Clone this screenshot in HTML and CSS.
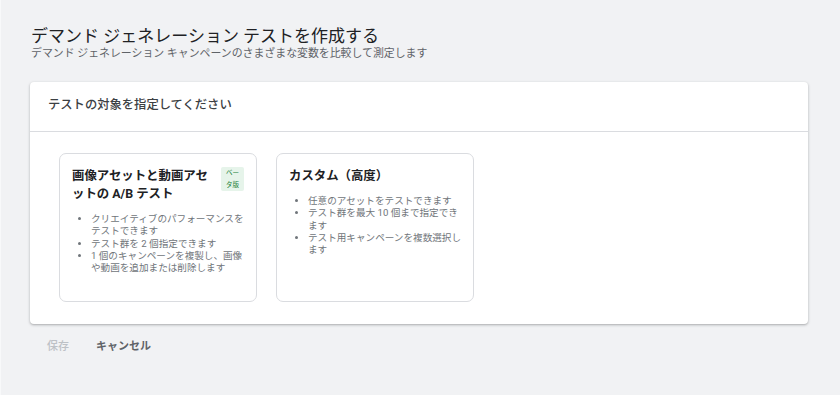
FILE: index.html
```html
<!DOCTYPE html>
<html lang="ja">
<head>
  <meta charset="UTF-8">
  <meta name="viewport" content="width=device-width, initial-scale=1.0">
  <title>デマンド ジェネレーション テストを作成する</title>
  <link rel="stylesheet" href="styles.css">
</head>
<body>
  <div class="page">
    <div class="page-header">
      <h1 class="title">デマンド ジェネレーション テストを作成する</h1>
      <p class="subtitle">デマンド ジェネレーション キャンペーンのさまざまな変数を比較して測定します</p>
    </div>

    <div class="panel">
      <div class="panel-header">テストの対象を指定してください</div>
      <div class="panel-body">
        <div class="option">
          <div class="option-head">
            <div class="option-title">画像アセットと動画アセットの A/B テスト</div>
            <span class="badge">ベータ版</span>
          </div>
          <ul class="option-list">
            <li>クリエイティブのパフォーマンスをテストできます</li>
            <li>テスト群を 2 個指定できます</li>
            <li>1 個のキャンペーンを複製し、画像や動画を追加または削除します</li>
          </ul>
        </div>

        <div class="option">
          <div class="option-head">
            <div class="option-title">カスタム（高度）</div>
          </div>
          <ul class="option-list">
            <li>任意のアセットをテストできます</li>
            <li>テスト群を最大 10 個まで指定できます</li>
            <li>テスト用キャンペーンを複数選択します</li>
          </ul>
        </div>
      </div>
    </div>

    <div class="actions">
      <button class="action disabled">保存</button>
      <button class="action">キャンセル</button>
    </div>
  </div>
</body>
</html>
```

FILE: styles.css
```css
html, body {
  margin: 0;
  height: 100%;
}

body {
  background-color: #f1f2f4;
  font-family: Roboto, "Noto Sans CJK JP", sans-serif;
  color: #202124;
}

.page {
  min-height: 100%;
  box-sizing: border-box;
  border-left: 1px solid #f8f9fa;
  padding: 25px 32px 0 29px;
}

.page-header {
  padding-left: 1px;
}

.title {
  margin: 0;
  font-size: 17px;
  font-weight: 400;
  line-height: 22px;
  color: #202124;
}

.subtitle {
  margin: 0;
  font-size: 10.9px;
  line-height: 14px;
  color: #5f6368;
}

.panel {
  margin-top: 21px;
  background: #ffffff;
  border-radius: 4px;
  box-shadow: 0 1px 2px rgba(60, 64, 67, 0.3), 0 1px 3px 1px rgba(60, 64, 67, 0.08);
}

.panel-header {
  height: 50px;
  box-sizing: border-box;
  padding: 14px 18px 0;
  font-size: 12.3px;
  line-height: 18px;
  font-weight: 500;
  color: #3c4043;
  border-bottom: 1px solid #dadce0;
}

.panel-body {
  display: flex;
  gap: 19px;
  padding: 21px 29px 22px;
}

.option {
  width: 198px;
  height: 149px;
  box-sizing: border-box;
  border: 1px solid #dadce0;
  border-radius: 7px;
  padding: 13px 12px 12px;
}

.option-head {
  display: flex;
  align-items: flex-start;
}

.option-title {
  flex: 1;
  font-size: 12.4px;
  line-height: 18px;
  font-weight: 700;
  color: #202124;
}

.badge {
  width: 23px;
  box-sizing: border-box;
  flex: none;
  margin-left: 10px;
  padding: 0 4px;
  background: #e6f4ea;
  color: #188038;
  border-radius: 2px;
  font-size: 6.5px;
  line-height: 12px;
  text-align: center;
}

.option-list {
  margin: 10px -2px 0 0;
  padding-left: 19px;
  font-size: 9.6px;
  line-height: 12.3px;
  color: #70757a;
}

.actions {
  display: flex;
  gap: 27px;
  padding: 15px 0 0 17px;
}

.action {
  background: none;
  border: none;
  padding: 0;
  font-family: inherit;
  font-size: 11px;
  line-height: 16px;
  font-weight: 700;
  color: #5f6368;
  cursor: pointer;
}

.action.disabled {
  color: #bdc1c6;
  font-weight: 500;
  cursor: default;
}
```
